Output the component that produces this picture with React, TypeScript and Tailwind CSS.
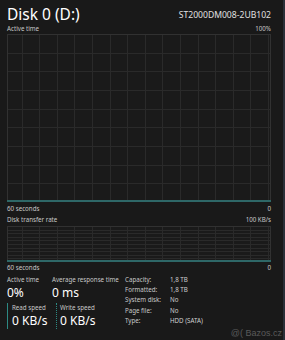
import React from "react";

function Grid({ w, h, cols, rows, offset = 0 }: { w: number; h: number; cols: number; rows: number; offset?: number }) {
  const vx: number[] = [];
  const cw = w / cols;
  for (let i = 0; i <= cols; i++) {
    const x = offset + i * cw;
    if (x > 0.5 && x < w - 0.5) vx.push(x);
  }
  const hy: number[] = [];
  for (let i = 1; i < rows; i++) hy.push((i * h) / rows);
  return (
    <svg width={w} height={h} className="block">
      <rect x={0} y={0} width={w} height={h} fill="#1a1a1a" />
      {vx.map((x, i) => (
        <line key={"v" + i} x1={Math.round(x) + 0.5} y1={0} x2={Math.round(x) + 0.5} y2={h} stroke="#2a2a2a" strokeWidth={1} />
      ))}
      {hy.map((y, i) => (
        <line key={"h" + i} x1={0} y1={Math.round(y) + 0.5} x2={w} y2={Math.round(y) + 0.5} stroke="#2a2a2a" strokeWidth={1} />
      ))}
      <rect x={0.5} y={0.5} width={w - 1} height={h - 1} fill="none" stroke="#313131" strokeWidth={1} />
      <line x1={0} y1={h - 1} x2={w} y2={h - 1} stroke="#2e6767" strokeWidth={2} />
    </svg>
  );
}

export default function App() {
  const font = { fontFamily: '"Noto Sans", "Open Sans", sans-serif' };
  return (
    <div className="relative w-[285px] h-[340px] overflow-hidden bg-[#191919] text-[#d8d8d8]" style={font}>
      <div className="absolute right-0 top-0 h-full w-[2px] bg-[#2a2f38]" />
      <div className="pl-[7px] pr-[14px]">
        <div className="flex items-end justify-between pt-[2px] h-[24px]">
          <div className="text-[15.5px] leading-[20px] text-white">Disk 0 (D:)</div>
          <div className="text-[8.6px] leading-[14px] text-[#e0e0e0] mb-[2px]">ST2000DM008-2UB102</div>
        </div>
        <div className="flex justify-between text-[6.2px] leading-[10px] text-[#c8c8c8]">
          <span>Active time</span>
          <span>100%</span>
        </div>
        <Grid w={264} h={168} cols={15} rows={9} offset={-3} />
        <div className="flex justify-between text-[6.2px] leading-[10px] text-[#c8c8c8] mt-[2px]">
          <span>60 seconds</span>
          <span>0</span>
        </div>
        <div className="flex justify-between text-[6.2px] leading-[10px] text-[#c8c8c8] mt-[1px]">
          <span>Disk transfer rate</span>
          <span>100 KB/s</span>
        </div>
        <div className="mt-[1px]">
          <Grid w={264} h={36} cols={15} rows={10} offset={-3} />
        </div>
        <div className="flex justify-between text-[6.2px] leading-[10px] text-[#c8c8c8] mt-[1px]">
          <span>60 seconds</span>
          <span>0</span>
        </div>
        <div className="flex mt-[2px]">
          <div className="w-[118px] shrink-0">
            <div className="flex">
              <div className="w-[45px] shrink-0">
                <div className="text-[6.2px] leading-[10px] text-[#c8c8c8] whitespace-nowrap">Active time</div>
                <div className="text-[12px] leading-[16px] text-white">0%</div>
              </div>
              <div>
                <div className="text-[6.2px] leading-[10px] text-[#c8c8c8] whitespace-nowrap">Average response time</div>
                <div className="text-[12px] leading-[16px] text-white">0 ms</div>
              </div>
            </div>
            <div className="flex mt-[2px]">
              <div className="w-[49px] shrink-0 border-l-[1.5px] border-[#2d8a84] pl-[4px]">
                <div className="text-[6.2px] leading-[10px] text-[#c8c8c8] whitespace-nowrap">Read speed</div>
                <div className="text-[12px] leading-[16px] text-white whitespace-nowrap">0 KB/s</div>
              </div>
              <div className="border-l-[1.5px] border-dotted border-[#2d8a84] pl-[3px]">
                <div className="text-[6.2px] leading-[10px] text-[#c8c8c8] whitespace-nowrap">Write speed</div>
                <div className="text-[12px] leading-[16px] text-white whitespace-nowrap">0 KB/s</div>
              </div>
            </div>
          </div>
          <div className="grid grid-cols-[45px_1fr] auto-rows-[10.2px] text-[6.2px] leading-[10px] text-[#d0d0d0] whitespace-nowrap">
            <span className="text-[#c8c8c8]">Capacity:</span>
            <span>1,8 TB</span>
            <span className="text-[#c8c8c8]">Formatted:</span>
            <span>1,8 TB</span>
            <span className="text-[#c8c8c8]">System disk:</span>
            <span>No</span>
            <span className="text-[#c8c8c8]">Page file:</span>
            <span>No</span>
            <span className="text-[#c8c8c8]">Type:</span>
            <span>HDD (SATA)</span>
          </div>
        </div>
      </div>
      <div className="absolute right-[3px] bottom-[1px] text-[9px] leading-[12px] text-[#5a5a5a]" style={{ fontFamily: '"Liberation Sans", sans-serif' }}>
        @( Bazos.cz
      </div>
    </div>
  );
}
